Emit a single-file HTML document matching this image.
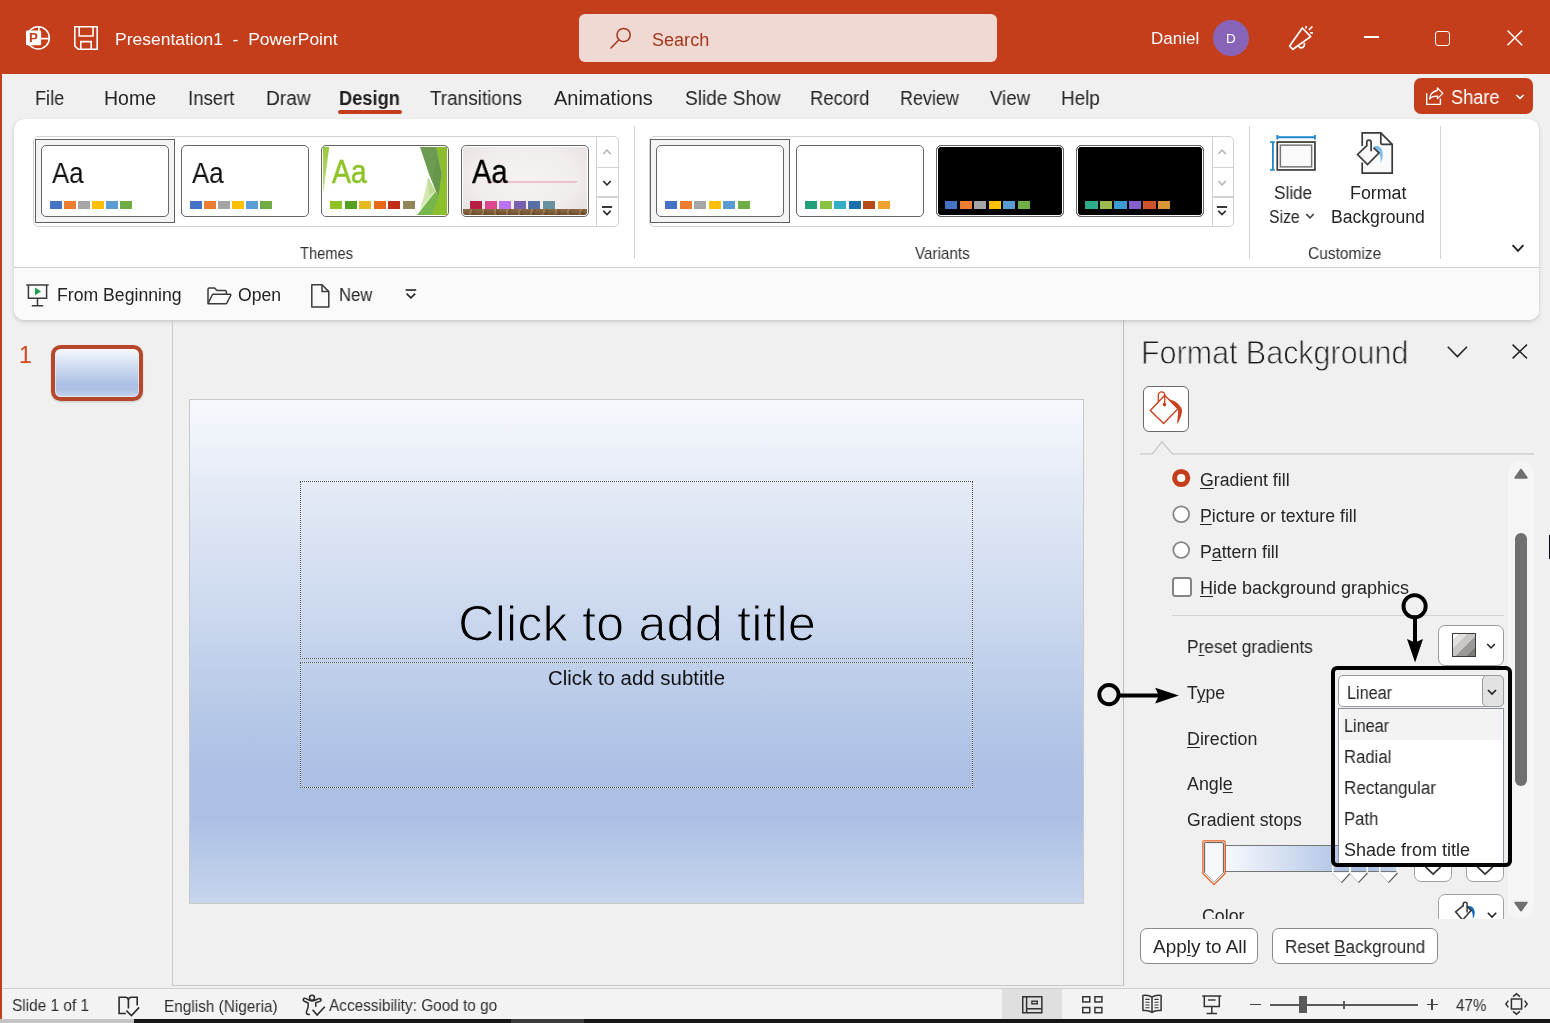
<!DOCTYPE html><html><head><meta charset="utf-8"><title>Presentation1 - PowerPoint</title><style>
html,body{margin:0;padding:0}body{width:1550px;height:1023px;overflow:hidden;position:relative;background:#f0f0f0;font-family:"Liberation Sans", sans-serif;}
.t{position:absolute;white-space:pre;line-height:normal;will-change:transform}svg{overflow:visible}u{text-decoration-thickness:1px;text-underline-offset:2px}
</style></head><body>
<div style="position:absolute;left:0px;top:0px;width:1550px;height:74px;background:#c43e1c"></div>
<div style="position:absolute;left:0px;top:0px;width:2px;height:1019px;background:#c43e1c"></div>
<svg style="position:absolute;left:24px;top:24px;" width="28" height="28" viewBox="0 0 28 28"><circle cx="14.2" cy="13.9" r="11.1" fill="none" stroke="#fff" stroke-width="1.6"/>
<path d="M14.9 3v11M14.9 14.6H25" stroke="#fff" stroke-width="1.6" fill="none"/>
<rect x="2" y="6.5" width="15.1" height="14.8" rx="1.2" fill="#fff"/>
</svg>
<span class="t" style="left:29.4px;top:30.47px;font-size:13.4px;color:#c43e1c;font-weight:700;">P</span>
<svg style="position:absolute;left:74px;top:26px;" width="24" height="24" viewBox="0 0 24 24"><path d="M0.8 0.8H23.2V23.2H4.2L0.8 19.8Z" fill="none" stroke="#fff" stroke-width="1.6"/>
<path d="M5.2 0.8V10H19V0.8" fill="none" stroke="#fff" stroke-width="1.6"/>
<path d="M6.8 23.2V15.6H17.2V23.2" fill="none" stroke="#fff" stroke-width="1.6"/></svg>
<span class="t" style="left:115.4px;top:29.78px;font-size:16.6px;color:#fff;transform:scaleX(1.0538);transform-origin:0 0;">Presentation1  -  PowerPoint</span>
<div style="position:absolute;left:579px;top:14px;width:418px;height:48px;background:#f0d9d3;border-radius:6px"></div>
<svg style="position:absolute;left:610px;top:27px;" width="22" height="22" viewBox="0 0 22 22"><circle cx="13.6" cy="8" r="6.6" fill="none" stroke="#a4371a" stroke-width="1.5"/><path d="M9 12.8L1 21" stroke="#a4371a" stroke-width="1.5" stroke-linecap="round"/></svg>
<span class="t" style="left:652.3px;top:29.67px;font-size:17.6px;color:#a4371a;transform:scaleX(1.0260);transform-origin:0 0;">Search</span>
<span class="t" style="left:1150.6px;top:29.32px;font-size:17px;color:#fff;transform:scaleX(0.9958);transform-origin:0 0;">Daniel</span>
<div style="position:absolute;left:1213px;top:20px;width:36px;height:36px;background:#8764b8;border-radius:50%"></div>
<span class="t" style="left:1226.3px;top:30.78px;font-size:13.5px;color:#fff;">D</span>
<svg style="position:absolute;left:1288px;top:25px;" width="27" height="26" viewBox="0 0 27 26"><path d="M14.3 3L22.7 11.6L4.9 24.3L1.6 21Z" fill="none" stroke="#fff" stroke-width="1.7" stroke-linejoin="round"/>
<path d="M10.4 20.6C11.6 24.2 17 23.4 16.4 17.8" fill="none" stroke="#fff" stroke-width="1.7"/>
<path d="M18.1 1V3.4M20.9 4.8L24.4 1.5M22.2 7.8H25" stroke="#fff" stroke-width="1.7"/></svg>
<div style="position:absolute;left:1363.5px;top:36.3px;width:15.4px;height:1.6px;background:#fff"></div>
<div style="position:absolute;left:1435.4px;top:30.5px;width:15px;height:15px;border:1.5px solid #fff;border-radius:3px;box-sizing:border-box"></div>
<svg style="position:absolute;left:1507.4px;top:30.3px;" width="16" height="16" viewBox="0 0 16 16"><path d="M0.5 0.5L15.2 15.2M15.2 0.5L0.5 15.2" stroke="#fff" stroke-width="1.5"/></svg>
<span class="t" style="left:34.7px;top:87.24px;font-size:19.4px;color:#242424;transform:scaleX(0.9344);transform-origin:0 0;">File</span>
<span class="t" style="left:103.9px;top:87.24px;font-size:19.4px;color:#242424;transform:scaleX(1.0071);transform-origin:0 0;">Home</span>
<span class="t" style="left:187.7px;top:87.24px;font-size:19.4px;color:#242424;transform:scaleX(0.9588);transform-origin:0 0;">Insert</span>
<span class="t" style="left:265.7px;top:87.24px;font-size:19.4px;color:#242424;transform:scaleX(0.9856);transform-origin:0 0;">Draw</span>
<span class="t" style="left:430.3px;top:87.24px;font-size:19.4px;color:#242424;transform:scaleX(0.9764);transform-origin:0 0;">Transitions</span>
<span class="t" style="left:554.2px;top:87.24px;font-size:19.4px;color:#242424;transform:scaleX(1.0300);transform-origin:0 0;">Animations</span>
<span class="t" style="left:684.5px;top:87.24px;font-size:19.4px;color:#242424;transform:scaleX(0.9844);transform-origin:0 0;">Slide Show</span>
<span class="t" style="left:809.8px;top:87.24px;font-size:19.4px;color:#242424;transform:scaleX(0.9502);transform-origin:0 0;">Record</span>
<span class="t" style="left:900.1px;top:87.24px;font-size:19.4px;color:#242424;transform:scaleX(0.9262);transform-origin:0 0;">Review</span>
<span class="t" style="left:989.7px;top:87.24px;font-size:19.4px;color:#242424;transform:scaleX(0.9595);transform-origin:0 0;">View</span>
<span class="t" style="left:1061.2px;top:87.24px;font-size:19.4px;color:#242424;transform:scaleX(0.9752);transform-origin:0 0;">Help</span>
<span class="t" style="left:339.2px;top:87.24px;font-size:19.4px;color:#1f1f1f;font-weight:700;transform:scaleX(0.9419);transform-origin:0 0;">Design</span>
<div style="position:absolute;left:338.2px;top:110.3px;width:63.8px;height:3.6px;background:#c43e1c;border-radius:2px"></div>
<div style="position:absolute;left:1413.8px;top:77.8px;width:119.4px;height:36.1px;background:#c43e1c;border-radius:7px"></div>
<svg style="position:absolute;left:1425px;top:87px;" width="19" height="19" viewBox="0 0 19 19"><path d="M1.7 6.2V17.4H15.4V11.4" fill="none" stroke="#fff" stroke-width="1.4"/>
<path d="M12.4 0.9L17.8 6.4L12.4 11.6V9.1C8.6 9 6 10.2 4.6 12C5 7.4 8 4.2 12.4 3.5Z" fill="none" stroke="#fff" stroke-width="1.3" stroke-linejoin="round"/></svg>
<span class="t" style="left:1450.6px;top:85.94px;font-size:19.4px;color:#fff;transform:scaleX(0.9353);transform-origin:0 0;">Share</span>
<svg style="position:absolute;left:1515px;top:94px;" width="10" height="6" viewBox="0 0 10 6"><path d="M1.3 1L5 4.4L8.7 1" fill="none" stroke="#fff" stroke-width="1.6"/></svg>
<div style="position:absolute;left:14px;top:119px;width:1525px;height:201px;background:#fff;border-radius:10px;box-shadow:0 2px 4px rgba(0,0,0,.15),0 0 1px rgba(0,0,0,.12)"></div>
<div style="position:absolute;left:14px;top:267px;width:1525px;height:53px;background:#fafafa;border-radius:0 0 10px 10px;border-top:1px solid #cdcdcd;box-sizing:border-box"></div>
<div style="position:absolute;left:634.0px;top:126px;width:1px;height:133px;background:#d4d4d4"></div>
<div style="position:absolute;left:1248.8px;top:126px;width:1px;height:133px;background:#d4d4d4"></div>
<div style="position:absolute;left:1439.7px;top:126px;width:1px;height:133px;background:#d4d4d4"></div>
<div style="position:absolute;left:33px;top:136px;width:585.7px;height:90.5px;border:1.2px solid #d2d2d2;border-radius:5px;box-sizing:border-box"></div>
<div style="position:absolute;left:596.1px;top:136px;width:1.2px;height:90.5px;background:#d2d2d2"></div>
<div style="position:absolute;left:596.1px;top:166.9px;width:22.6px;height:1.6px;background:#d2d2d2"></div>
<div style="position:absolute;left:596.1px;top:196.1px;width:22.6px;height:1.6px;background:#d2d2d2"></div>
<div style="position:absolute;left:35.2px;top:139px;width:139.6px;height:84px;border:1px solid #606060;background:#f4f4f4;box-sizing:border-box"></div>
<div style="position:absolute;left:41px;top:145px;width:128px;height:72px;border:1.3px solid #666;border-radius:5px;box-sizing:border-box;overflow:hidden;background:#fff"></div>
<div style="position:absolute;left:181px;top:145px;width:128px;height:72px;border:1.3px solid #666;border-radius:5px;box-sizing:border-box;overflow:hidden;background:#fff"></div>
<span class="t" style="left:52.3px;top:156.82px;font-size:28.6px;color:#111;transform:scaleX(0.9033);transform-origin:0 0;">Aa</span>
<div style="position:absolute;left:50.0px;top:201.1px;width:12px;height:7.7px;background:#4472c4"></div>
<div style="position:absolute;left:64.04px;top:201.1px;width:12px;height:7.7px;background:#ed7d31"></div>
<div style="position:absolute;left:78.08px;top:201.1px;width:12px;height:7.7px;background:#a5a5a5"></div>
<div style="position:absolute;left:92.12px;top:201.1px;width:12px;height:7.7px;background:#ffc000"></div>
<div style="position:absolute;left:106.16px;top:201.1px;width:12px;height:7.7px;background:#5b9bd5"></div>
<div style="position:absolute;left:120.2px;top:201.1px;width:12px;height:7.7px;background:#70ad47"></div>
<span class="t" style="left:192.3px;top:156.82px;font-size:28.6px;color:#111;transform:scaleX(0.9033);transform-origin:0 0;">Aa</span>
<div style="position:absolute;left:190.0px;top:201.1px;width:12px;height:7.7px;background:#4472c4"></div>
<div style="position:absolute;left:204.04px;top:201.1px;width:12px;height:7.7px;background:#ed7d31"></div>
<div style="position:absolute;left:218.08px;top:201.1px;width:12px;height:7.7px;background:#a5a5a5"></div>
<div style="position:absolute;left:232.12px;top:201.1px;width:12px;height:7.7px;background:#ffc000"></div>
<div style="position:absolute;left:246.16px;top:201.1px;width:12px;height:7.7px;background:#5b9bd5"></div>
<div style="position:absolute;left:260.2px;top:201.1px;width:12px;height:7.7px;background:#70ad47"></div>
<div style="position:absolute;left:321px;top:145px;width:128px;height:72px;border:1.3px solid #666;border-radius:5px;box-sizing:border-box;overflow:hidden;background:#fff"><svg width="128" height="72" style="position:absolute;left:-1px;top:-1px">
<defs><linearGradient id="fl" x1="0" y1="0" x2="0" y2="1"><stop offset="0" stop-color="#97c83a"/><stop offset="1" stop-color="#c3df8c"/></linearGradient></defs>
<polygon points="2,2 8.2,2 2.6,45.5 2,45.5" fill="url(#fl)"/>
<polygon points="115,2 126,2 126,70 110,70 117,52 120.5,28" fill="#8bbd2f"/>
<polygon points="96,70 111,70 117.5,52 114.5,46.5" fill="#77b64a"/>
<polygon points="99,2 115.3,2 120.6,28 117.2,52 108,29" fill="#6e9b52"/>
<polygon points="112,30 117.2,52 120.6,28 116,14" fill="#65964a"/>
<polygon points="107,32 114.5,46.5 99,65 104,47" fill="#d4e9b0"/>
<polygon points="107,32 114.5,46.5 108,50" fill="#bfdd92"/>
<polygon points="117.2,52 121,40 126,36 126,70 119,70" fill="#8fc32a" opacity=".6"/>
</svg></div>
<span class="t" style="left:332.1px;top:152.73px;font-size:33px;color:#8cc224;transform:scaleX(0.8594);transform-origin:0 0;-webkit-text-stroke:.5px #8cc224;">Aa</span>
<div style="position:absolute;left:330.0px;top:201.2px;width:12.3px;height:7.7px;background:#90c226"></div>
<div style="position:absolute;left:344.5px;top:201.2px;width:12.3px;height:7.7px;background:#54a021"></div>
<div style="position:absolute;left:359.0px;top:201.2px;width:12.3px;height:7.7px;background:#e6b91e"></div>
<div style="position:absolute;left:373.5px;top:201.2px;width:12.3px;height:7.7px;background:#e76618"></div>
<div style="position:absolute;left:388.0px;top:201.2px;width:12.3px;height:7.7px;background:#c42f1a"></div>
<div style="position:absolute;left:402.5px;top:201.2px;width:12.3px;height:7.7px;background:#918655"></div>
<div style="position:absolute;left:461px;top:145px;width:128px;height:72px;border:1.3px solid #666;border-radius:5px;box-sizing:border-box;overflow:hidden;background:#fff"><div style="position:absolute;left:1px;top:1px;right:1px;bottom:1px;border-radius:3px;background:radial-gradient(ellipse 75% 90% at 50% 45%,#f5f2f1 0,#f1edec 55%,#e2dbda 100%)"></div>
<div style="position:absolute;left:1px;right:1px;bottom:1px;height:6.4px;border-radius:0 0 3px 3px;background:repeating-linear-gradient(100deg,rgba(255,255,255,0) 0 7px,rgba(255,235,200,.18) 7px 9px,rgba(60,30,0,.12) 9px 12px),linear-gradient(#8d6c45,#6e4e2c)"></div>
<div style="position:absolute;left:24.5px;top:35.4px;width:90.5px;height:1.4px;background:#ebc3ce"></div></div>
<span class="t" style="left:472.1px;top:152.73px;font-size:33px;color:#000;transform:scaleX(0.8817);transform-origin:0 0;-webkit-text-stroke:.3px #000;">Aa</span>
<div style="position:absolute;left:470.0px;top:201.2px;width:12.3px;height:7.7px;background:#b71e42"></div>
<div style="position:absolute;left:484.5px;top:201.2px;width:12.3px;height:7.7px;background:#de478e"></div>
<div style="position:absolute;left:499.0px;top:201.2px;width:12.3px;height:7.7px;background:#bc72f0"></div>
<div style="position:absolute;left:513.5px;top:201.2px;width:12.3px;height:7.7px;background:#795faf"></div>
<div style="position:absolute;left:528.0px;top:201.2px;width:12.3px;height:7.7px;background:#586ea6"></div>
<div style="position:absolute;left:542.5px;top:201.2px;width:12.3px;height:7.7px;background:#6892a0"></div>
<svg style="position:absolute;left:597.1px;top:141.7px;" width="20" height="20" viewBox="0 0 20 20"><path d="M-3.7 1.95L0 -1.95L3.7 1.95" transform="translate(10 10)" fill="none" stroke="#b4b4b4" stroke-width="1.6"/></svg>
<svg style="position:absolute;left:597.1px;top:172.5px;" width="20" height="20" viewBox="0 0 20 20"><path d="M-3.7 -1.95L0 1.95L3.7 -1.95" transform="translate(10 10)" fill="none" stroke="#222" stroke-width="1.6"/></svg>
<svg style="position:absolute;left:602.1px;top:205px;" width="10" height="11" viewBox="0 0 10 11"><path d="M-0.1 2H10.1" stroke="#222" stroke-width="1.8"/><path d="M1.3 5.7L5 9.6L8.7 5.7" fill="none" stroke="#222" stroke-width="1.6"/></svg>
<span class="t" style="left:300.3px;top:244.04px;font-size:16.2px;color:#333;transform:scaleX(0.9045);transform-origin:0 0;">Themes</span>
<div style="position:absolute;left:649.2px;top:136px;width:585.0px;height:90.5px;border:1.2px solid #d2d2d2;border-radius:5px;box-sizing:border-box"></div>
<div style="position:absolute;left:1211.6000000000001px;top:136px;width:1.2px;height:90.5px;background:#d2d2d2"></div>
<div style="position:absolute;left:1211.6000000000001px;top:166.9px;width:22.6px;height:1.6px;background:#d2d2d2"></div>
<div style="position:absolute;left:1211.6000000000001px;top:196.1px;width:22.6px;height:1.6px;background:#d2d2d2"></div>
<div style="position:absolute;left:650.4px;top:139px;width:139.6px;height:84px;border:1px solid #606060;background:#f4f4f4;box-sizing:border-box"></div>
<div style="position:absolute;left:656px;top:145px;width:128px;height:72px;border:1.3px solid #666;border-radius:5px;box-sizing:border-box;overflow:hidden;background:#fff"></div>
<div style="position:absolute;left:796px;top:145px;width:128px;height:72px;border:1.3px solid #666;border-radius:5px;box-sizing:border-box;overflow:hidden;background:#fff"></div>
<div style="position:absolute;left:665.1px;top:201.2px;width:12.3px;height:7.7px;background:#4472c4"></div>
<div style="position:absolute;left:679.6px;top:201.2px;width:12.3px;height:7.7px;background:#ed7d31"></div>
<div style="position:absolute;left:694.1px;top:201.2px;width:12.3px;height:7.7px;background:#a5a5a5"></div>
<div style="position:absolute;left:708.6px;top:201.2px;width:12.3px;height:7.7px;background:#ffc000"></div>
<div style="position:absolute;left:723.1px;top:201.2px;width:12.3px;height:7.7px;background:#5b9bd5"></div>
<div style="position:absolute;left:737.6px;top:201.2px;width:12.3px;height:7.7px;background:#70ad47"></div>
<div style="position:absolute;left:805.0px;top:201.2px;width:12.3px;height:7.7px;background:#229e7a"></div>
<div style="position:absolute;left:819.5px;top:201.2px;width:12.3px;height:7.7px;background:#89c143"></div>
<div style="position:absolute;left:834.0px;top:201.2px;width:12.3px;height:7.7px;background:#36adc8"></div>
<div style="position:absolute;left:848.5px;top:201.2px;width:12.3px;height:7.7px;background:#1d6fa9"></div>
<div style="position:absolute;left:863.0px;top:201.2px;width:12.3px;height:7.7px;background:#b64a1b"></div>
<div style="position:absolute;left:877.5px;top:201.2px;width:12.3px;height:7.7px;background:#f0a22e"></div>
<div style="position:absolute;left:936.2px;top:145px;width:128px;height:72px;border:1.3px solid #666;border-radius:5px;box-sizing:border-box;overflow:hidden;background:#000;box-shadow:inset 0 0 0 1px #fff"></div>
<div style="position:absolute;left:1076.2px;top:145px;width:128px;height:72px;border:1.3px solid #666;border-radius:5px;box-sizing:border-box;overflow:hidden;background:#000;box-shadow:inset 0 0 0 1px #fff"></div>
<div style="position:absolute;left:945.2px;top:201.2px;width:12.3px;height:7.7px;background:#4472c4"></div>
<div style="position:absolute;left:959.7px;top:201.2px;width:12.3px;height:7.7px;background:#ed7d31"></div>
<div style="position:absolute;left:974.2px;top:201.2px;width:12.3px;height:7.7px;background:#a5a5a5"></div>
<div style="position:absolute;left:988.7px;top:201.2px;width:12.3px;height:7.7px;background:#ffc000"></div>
<div style="position:absolute;left:1003.2px;top:201.2px;width:12.3px;height:7.7px;background:#5b9bd5"></div>
<div style="position:absolute;left:1017.7px;top:201.2px;width:12.3px;height:7.7px;background:#70ad47"></div>
<div style="position:absolute;left:1085.3px;top:201.2px;width:12.3px;height:7.7px;background:#2daa8a"></div>
<div style="position:absolute;left:1099.8px;top:201.2px;width:12.3px;height:7.7px;background:#9bbb4f"></div>
<div style="position:absolute;left:1114.3px;top:201.2px;width:12.3px;height:7.7px;background:#3a9cd0"></div>
<div style="position:absolute;left:1128.8px;top:201.2px;width:12.3px;height:7.7px;background:#8560c8"></div>
<div style="position:absolute;left:1143.3px;top:201.2px;width:12.3px;height:7.7px;background:#d0512e"></div>
<div style="position:absolute;left:1157.8px;top:201.2px;width:12.3px;height:7.7px;background:#db9535"></div>
<svg style="position:absolute;left:1211.8px;top:141.7px;" width="20" height="20" viewBox="0 0 20 20"><path d="M-3.7 1.95L0 -1.95L3.7 1.95" transform="translate(10 10)" fill="none" stroke="#b4b4b4" stroke-width="1.6"/></svg>
<svg style="position:absolute;left:1211.8px;top:172.5px;" width="20" height="20" viewBox="0 0 20 20"><path d="M-3.7 -1.95L0 1.95L3.7 -1.95" transform="translate(10 10)" fill="none" stroke="#b4b4b4" stroke-width="1.6"/></svg>
<svg style="position:absolute;left:1216.8px;top:205px;" width="10" height="11" viewBox="0 0 10 11"><path d="M-0.1 2H10.1" stroke="#222" stroke-width="1.8"/><path d="M1.3 5.7L5 9.6L8.7 5.7" fill="none" stroke="#222" stroke-width="1.6"/></svg>
<span class="t" style="left:914.6px;top:244.04px;font-size:16.2px;color:#333;transform:scaleX(0.9418);transform-origin:0 0;">Variants</span>
<svg style="position:absolute;left:1270px;top:134px;" width="47" height="38" viewBox="0 0 47 38"><path d="M6.4 3.3H45.8M7.3 1.1V5.6M44.9 1.1V5.6" stroke="#1e87cf" stroke-width="1.9" fill="none"/>
<path d="M2.9 7.2V36.8M0.1 8.1H4.8M0.1 35.9H4.8" stroke="#1e87cf" stroke-width="1.8" fill="none"/>
<rect x="7.25" y="8.05" width="37.7" height="27.9" fill="#fff" stroke="#3a3a3a" stroke-width="1.7"/>
<rect x="10.35" y="11.15" width="31.3" height="21.7" fill="#fafafa" stroke="#797673" stroke-width="1.5"/></svg>
<span class="t" style="left:1274px;top:182.67px;font-size:17.6px;color:#242424;transform:scaleX(0.9764);transform-origin:0 0;">Slide</span>
<span class="t" style="left:1269.4px;top:206.57px;font-size:17.6px;color:#242424;transform:scaleX(0.8938);transform-origin:0 0;">Size</span>
<svg style="position:absolute;left:1300.3px;top:205.8px;" width="20" height="20" viewBox="0 0 20 20"><path d="M-3.7 -2.0L0 2.0L3.7 -2.0" transform="translate(10 10)" fill="none" stroke="#333" stroke-width="1.5"/></svg>
<svg style="position:absolute;left:1356px;top:131px;" width="38" height="44" viewBox="0 0 38 44"><path d="M6.2 15V1.8H24.8L36.2 13.4V42.1H6.2V31.6Z" fill="#fafafa" stroke="none"/>
<path d="M6.2 15V1.8H24.8L36.2 13.4V42.1H6.2V31.4" fill="none" stroke="#3a3a3a" stroke-width="1.7"/>
<path d="M24.8 1.8V12a1.4 1.4 0 0 0 1.4 1.4H36.2" fill="none" stroke="#3a3a3a" stroke-width="1.7"/>
<path d="M17.8 15.5C20 14 24 14.4 26 19C27.6 23 26.8 28 24.4 31.9C25 27 24.6 24.5 22.9 22Z" fill="#7dbdeb"/>
<path d="M10.8 14.7L1.6 23.5L11.5 33.5L22.9 22L17.5 16.6" fill="#fafafa" stroke="#3a3a3a" stroke-width="1.7" stroke-linejoin="miter"/>
<path d="M10.8 15.2V11.2a2.15 2.15 0 0 1 4.3 0V20.3" fill="none" stroke="#3a3a3a" stroke-width="1.7"/></svg>
<span class="t" style="left:1349.8px;top:182.67px;font-size:17.6px;color:#242424;transform:scaleX(1.0137);transform-origin:0 0;">Format</span>
<span class="t" style="left:1330.6px;top:206.57px;font-size:17.6px;color:#242424;transform:scaleX(0.9967);transform-origin:0 0;">Background</span>
<span class="t" style="left:1308px;top:244.04px;font-size:16.2px;color:#333;transform:scaleX(0.9573);transform-origin:0 0;">Customize</span>
<svg style="position:absolute;left:1507.8px;top:237.8px;" width="20" height="20" viewBox="0 0 20 20"><path d="M-5.4 -2.8L0 2.8L5.4 -2.8" transform="translate(10 10)" fill="none" stroke="#222" stroke-width="1.9"/></svg>
<svg style="position:absolute;left:26px;top:284px;" width="23" height="23" viewBox="0 0 23 23"><path d="M0.3 1H22.7" stroke="#3b3b3b" stroke-width="1.5"/><path d="M2.4 1V14.2H20.6V1" fill="none" stroke="#3b3b3b" stroke-width="1.5"/>
<path d="M11.5 14.2V21.6M5.8 21.8H17.2" stroke="#3b3b3b" stroke-width="1.5"/><path d="M9 3.6L15 7.4L9 11.2Z" fill="#1e9e4a"/></svg>
<span class="t" style="left:56.6px;top:284.87px;font-size:17.6px;color:#242424;transform:scaleX(1.0032);transform-origin:0 0;">From Beginning</span>
<svg style="position:absolute;left:207px;top:286.5px;" width="25" height="18" viewBox="0 0 25 18"><path d="M1 16.5V2.2a1.2 1.2 0 0 1 1.2-1.2H7.6L10 3.6H18.2a1.2 1.2 0 0 1 1.2 1.2V7.2" fill="none" stroke="#3b3b3b" stroke-width="1.5" stroke-linejoin="round"/>
<path d="M1 16.8L5.3 7.8a1.2 1.2 0 0 1 1-.6H23.2a.7.7 0 0 1 .6 1L19.8 16.2a1.2 1.2 0 0 1-1 .6Z" fill="none" stroke="#3b3b3b" stroke-width="1.5" stroke-linejoin="round"/></svg>
<span class="t" style="left:238.3px;top:284.87px;font-size:17.6px;color:#242424;transform:scaleX(0.9989);transform-origin:0 0;">Open</span>
<svg style="position:absolute;left:310.5px;top:283.8px;" width="19" height="24" viewBox="0 0 19 24"><path d="M0.8 0.8H11L17.8 7.6V23H0.8Z" fill="none" stroke="#3b3b3b" stroke-width="1.5" stroke-linejoin="round"/><path d="M11 0.8V7.6H17.8" fill="none" stroke="#3b3b3b" stroke-width="1.5" stroke-linejoin="round"/></svg>
<span class="t" style="left:339.3px;top:284.87px;font-size:17.6px;color:#242424;transform:scaleX(0.9459);transform-origin:0 0;">New</span>
<svg style="position:absolute;left:405.3px;top:289.4px;" width="12" height="10" viewBox="0 0 12 10"><path d="M0.6 1H11.2" stroke="#222" stroke-width="1.6"/><path d="M1.6 4.6L5.9 8.8L10.2 4.6" fill="none" stroke="#222" stroke-width="1.6"/></svg>
<span class="t" style="left:19.2px;top:342.49px;font-size:23px;color:#cf4520;">1</span>
<div style="position:absolute;left:50.9px;top:344.7px;width:92.2px;height:56.4px;border:4px solid #b7472a;border-radius:9.5px;box-sizing:border-box;background:linear-gradient(180deg,#f6f8fc 0%,#abc0e4 74%,#abc0e4 83%,#c7d5ed 100%);box-shadow:inset 0 0 0 1px rgba(255,255,255,.45),0 1px 2px rgba(0,0,0,.18)"></div>
<div style="position:absolute;left:172px;top:320px;width:1px;height:666px;background:#c8c8c8"></div>
<div style="position:absolute;left:173px;top:985px;width:951px;height:1px;background:#c8c8c8"></div>
<div style="position:absolute;left:189px;top:399px;width:895px;height:505px;background:linear-gradient(180deg,#f6f8fc 0%,#abc0e4 74%,#abc0e4 83%,#c7d5ed 100%);border:1px solid #c9c9c9;box-sizing:border-box"></div>
<div style="position:absolute;left:300px;top:481px;width:673px;height:177.5px;border:1px solid rgba(255,255,255,.75);box-sizing:border-box"></div>
<div style="position:absolute;left:300px;top:481px;width:673px;height:177.5px;border:1px dotted #4a4a4a;box-sizing:border-box"></div>
<div style="position:absolute;left:300px;top:661.5px;width:673px;height:126.5px;border:1px solid rgba(255,255,255,.75);box-sizing:border-box"></div>
<div style="position:absolute;left:300px;top:661.5px;width:673px;height:126.5px;border:1px dotted #4a4a4a;box-sizing:border-box"></div>
<span class="t" style="left:457.6px;top:594.60px;font-size:49.5px;color:#000;transform:scaleX(1.0246);transform-origin:0 0;-webkit-text-stroke:1.2px #c9d7ee;">Click to add title</span>
<span class="t" style="left:548.2px;top:667.26px;font-size:19.6px;color:#111;transform:scaleX(1.0418);transform-origin:0 0;">Click to add subtitle</span>
<div style="position:absolute;left:1122.8px;top:320px;width:1.2px;height:666px;background:#bcbcbc"></div>
<span class="t" style="left:1141.4px;top:334.25px;font-size:33.2px;color:#1c1c1c;transform:scaleX(0.9175);transform-origin:0 0;-webkit-text-stroke:.9px #f0f0f0;">Format Background</span>
<svg style="position:absolute;left:1447px;top:346px;" width="21" height="12" viewBox="0 0 21 12"><path d="M0.8 0.8L10.4 10.6L20 0.8" fill="none" stroke="#222" stroke-width="1.5"/></svg>
<svg style="position:absolute;left:1511.6px;top:344px;" width="16" height="15" viewBox="0 0 16 15"><path d="M0.6 0.6L15 14.4M15 0.6L0.6 14.4" stroke="#222" stroke-width="1.5"/></svg>
<div style="position:absolute;left:1143.3px;top:386.1px;width:45.7px;height:45.7px;background:#fff;border:1.2px solid #6a6a6a;border-radius:6px;box-sizing:border-box"></div>
<svg style="position:absolute;left:1149px;top:392px;" width="34" height="34" viewBox="0 0 34 34"><path d="M15.7 3.2L1.3 18.5L14.6 31.4L29 16.7Z" fill="none" stroke="#c8401c" stroke-width="1.4" stroke-linejoin="miter"/>
<path d="M9.3 10V3.1a3.2 3.2 0 0 1 6.4 0V11.5" fill="none" stroke="#c8401c" stroke-width="1.3"/>
<circle cx="15.5" cy="12.6" r="1.8" fill="#c8401c"/>
<path d="M20 7.2C24 8 30 10.5 32.8 17C33.6 21.5 31 27.5 28.3 32.2C28 27 29.8 21.5 29 16.7Z" fill="#c8401c"/></svg>
<svg style="position:absolute;left:1140px;top:440px;" width="395" height="16" viewBox="0 0 395 16"><path d="M0 13.9H12.4L22 1.8L32.4 13.9H394.5" fill="none" stroke="#c8c8c8" stroke-width="1.4"/></svg>
<svg style="position:absolute;left:1170px;top:468px;" width="21" height="21" viewBox="0 0 21 21"><circle cx="11.2" cy="10" r="6.6" fill="#fff" stroke="#c43e1c" stroke-width="5"/></svg>
<svg style="position:absolute;left:1170px;top:504px;" width="21" height="21" viewBox="0 0 21 21"><circle cx="11.2" cy="10.2" r="7.9" fill="#fff" stroke="#858585" stroke-width="1.8"/></svg>
<svg style="position:absolute;left:1170px;top:540px;" width="21" height="21" viewBox="0 0 21 21"><circle cx="11.2" cy="10" r="7.9" fill="#fff" stroke="#858585" stroke-width="1.8"/></svg>
<div style="position:absolute;left:1172px;top:577.3px;width:19.9px;height:19.3px;background:#fff;border:2px solid #858585;border-radius:3.5px;box-sizing:border-box"></div>
<span class="t" style="left:1200px;top:470.37px;font-size:17.6px;color:#262626;transform:scaleX(1.0067);transform-origin:0 0;"><u>G</u>radient fill</span>
<span class="t" style="left:1200px;top:506.47px;font-size:17.6px;color:#262626;transform:scaleX(1.0078);transform-origin:0 0;"><u>P</u>icture or texture fill</span>
<span class="t" style="left:1200px;top:542.27px;font-size:17.6px;color:#262626;transform:scaleX(1.0056);transform-origin:0 0;">P<u>a</u>ttern fill</span>
<span class="t" style="left:1200px;top:578.37px;font-size:17.6px;color:#262626;transform:scaleX(1.0224);transform-origin:0 0;"><u>H</u>ide background graphics</span>
<div style="position:absolute;left:1172px;top:615px;width:332px;height:1px;background:#d2d2d2"></div>
<div style="position:absolute;left:1508px;top:461px;width:26px;height:458px;background:#f5f5f5;border-radius:13px"></div>
<svg style="position:absolute;left:1514px;top:468.2px;" width="14" height="11" viewBox="0 0 14 11"><path d="M7 1.6L12.8 9.8H1.2Z" fill="#707070" stroke="#707070" stroke-width="1.8" stroke-linejoin="round"/></svg>
<svg style="position:absolute;left:1514px;top:900.6px;" width="14" height="11" viewBox="0 0 14 11"><path d="M7 9.6L12.8 1.6H1.2Z" fill="#707070" stroke="#707070" stroke-width="1.8" stroke-linejoin="round"/></svg>
<div style="position:absolute;left:1515px;top:532.8px;width:12px;height:253.5px;background:#707070;border-radius:6px"></div>
<span class="t" style="left:1187.3px;top:636.77px;font-size:17.6px;color:#262626;transform:scaleX(0.9817);transform-origin:0 0;">P<u>r</u>eset gradients</span>
<div style="position:absolute;left:1438.3px;top:625px;width:65.5px;height:41px;background:#fff;border:1px solid #9a9a9a;border-radius:7px;box-sizing:border-box"></div>
<div style="position:absolute;left:1451.9px;top:632.8px;width:24px;height:24.1px;background:linear-gradient(135deg,#fff 0%,#fff 12%,#e1e0de 13%,#e1e0de 32%,#c9c7c5 33%,#c9c7c5 55%,#9b9a99 56%,#9b9a99 80%,#7d7b78 81%,#7d7b78 100%);border:1.5px solid #3a3a3a;box-sizing:border-box"></div>
<svg style="position:absolute;left:1481.2px;top:635.5px;" width="20" height="20" viewBox="0 0 20 20"><path d="M-3.8 -1.95L0 1.95L3.8 -1.95" transform="translate(10 10)" fill="none" stroke="#222" stroke-width="1.6"/></svg>
<span class="t" style="left:1187.3px;top:682.77px;font-size:17.6px;color:#262626;transform:scaleX(0.9880);transform-origin:0 0;">T<u>y</u>pe</span>
<span class="t" style="left:1187.3px;top:728.77px;font-size:17.6px;color:#262626;transform:scaleX(1.0139);transform-origin:0 0;"><u>D</u>irection</span>
<span class="t" style="left:1187.3px;top:774.17px;font-size:17.6px;color:#262626;transform:scaleX(1.0152);transform-origin:0 0;">Angl<u>e</u></span>
<span class="t" style="left:1187.3px;top:810.37px;font-size:17.6px;color:#262626;transform:scaleX(1.0042);transform-origin:0 0;">Gradient stops</span>
<div style="position:absolute;left:1225px;top:845px;width:173px;height:26.7px;background:linear-gradient(90deg,#f6f8fc 0%,#abc0e4 74%,#abc0e4 83%,#c7d5ed 100%);border:1px solid #757575;box-sizing:border-box"></div>
<svg style="position:absolute;left:1331.9px;top:843px;" width="19" height="41" viewBox="0 0 19 41"><path d="M0.8 0V30.2M18.2 0V30.2" stroke="#fff" stroke-width="1.5" fill="none"/><path d="M0.5 30L9.5 39.6L18.5 30Z" fill="#fff"/><path d="M0.5 30L9.5 39.6" stroke="#c9c9c9" stroke-width="1" fill="none"/><path d="M9.5 39.6L18.5 30" stroke="#555" stroke-width="1.1" fill="none"/></svg>
<svg style="position:absolute;left:1349.1px;top:843px;" width="19" height="41" viewBox="0 0 19 41"><path d="M0.8 0V30.2M18.2 0V30.2" stroke="#fff" stroke-width="1.5" fill="none"/><path d="M0.5 30L9.5 39.6L18.5 30Z" fill="#fff"/><path d="M0.5 30L9.5 39.6" stroke="#c9c9c9" stroke-width="1" fill="none"/><path d="M9.5 39.6L18.5 30" stroke="#555" stroke-width="1.1" fill="none"/></svg>
<svg style="position:absolute;left:1378.5px;top:843px;" width="19" height="41" viewBox="0 0 19 41"><path d="M0.8 0V30.2M18.2 0V30.2" stroke="#fff" stroke-width="1.5" fill="none"/><path d="M0.5 30L9.5 39.6L18.5 30Z" fill="#fff"/><path d="M0.5 30L9.5 39.6" stroke="#c9c9c9" stroke-width="1" fill="none"/><path d="M9.5 39.6L18.5 30" stroke="#555" stroke-width="1.1" fill="none"/></svg>
<svg style="position:absolute;left:1201.9px;top:840px;" width="24" height="46" viewBox="0 0 24 46"><path d="M2.2 0.9H21.8a1.3 1.3 0 0 1 1.3 1.3V33.4L12 44.6L0.9 33.4V2.2A1.3 1.3 0 0 1 2.2 0.9Z" fill="#f6f8fc" stroke="#e8601c" stroke-width="1.3"/><path d="M3.2 2.6H20.8a.6.6 0 0 1 .6.6V32.6L12 42L2.6 32.6V3.2a.6.6 0 0 1 .6-.6Z" fill="none" stroke="#4a4a4a" stroke-width="0.9"/><path d="M2.6 32.6L12 42L21.4 32.6Z" fill="#fff"/></svg>
<div style="position:absolute;left:1414.2px;top:842px;width:37.5px;height:39.7px;background:#fff;border:1px solid #a0a0a0;border-radius:7px;box-sizing:border-box"></div>
<svg style="position:absolute;left:1424.8px;top:856px;" width="16" height="20" viewBox="0 0 16 20"><path d="M1 0V11.3L8.1 18.1L15.2 11.3V0" fill="none" stroke="#333" stroke-width="1.7" stroke-linejoin="miter"/></svg>
<div style="position:absolute;left:1466.2px;top:842px;width:37.5px;height:39.7px;background:#fff;border:1px solid #a0a0a0;border-radius:7px;box-sizing:border-box"></div>
<svg style="position:absolute;left:1476.8px;top:856px;" width="16" height="20" viewBox="0 0 16 20"><path d="M1 0V11.3L8.1 18.1L15.2 11.3V0" fill="none" stroke="#333" stroke-width="1.7" stroke-linejoin="miter"/></svg>
<div style="position:absolute;left:1140px;top:890px;width:370px;height:28.7px;overflow:hidden">
<span class="t" style="left:62.4px;top:16.07px;font-size:17.6px;color:#262626;transform:scaleX(1.01);transform-origin:0 0"><u>C</u>olor</span>
<div style="position:absolute;left:298px;top:4px;width:65.9px;height:40px;background:#fff;border:1px solid #a0a0a0;border-radius:7px;box-sizing:border-box"></div>
<svg style="position:absolute;left:314px;top:10px" width="24" height="24" viewBox="0 0 24 24"><path d="M13.4 6.2C17.6 5.2 21.6 8.6 20.6 14.5C20.2 16.5 19.8 17.4 18.8 18.8C19 14.5 18.4 12.6 17 10.6Z" fill="#0f6cbd"/><path d="M9.2 5.6L1.6 11.8L8.6 20L17 10.6L13.1 6.3" fill="#fff" stroke="#333" stroke-width="1.5" stroke-linejoin="miter"/><path d="M9.2 6.4V4.2a1.95 1.95 0 0 1 3.9 0V12.4" fill="none" stroke="#333" stroke-width="1.5"/></svg>
<svg style="position:absolute;left:346.6px;top:21.8px" width="10" height="6" viewBox="0 0 10 6"><path d="M0.8 0.8L5 5L9.2 0.8" fill="none" stroke="#222" stroke-width="1.6"/></svg>
</div>
<div style="position:absolute;left:1338px;top:675px;width:166px;height:32.4px;background:#fff;border:1px solid #9a9a9a;border-radius:5px;box-sizing:border-box"></div>
<div style="position:absolute;left:1481.9px;top:675px;width:22px;height:32.4px;background:#e2e2e2;border:1px solid #9a9a9a;border-radius:5px;box-sizing:border-box"></div>
<svg style="position:absolute;left:1482.1px;top:681.5px;" width="20" height="20" viewBox="0 0 20 20"><path d="M-4.0 -2.0L0 2.0L4.0 -2.0" transform="translate(10 10)" fill="none" stroke="#222" stroke-width="1.7"/></svg>
<span class="t" style="left:1346.7px;top:682.77px;font-size:17.6px;color:#262626;transform:scaleX(0.9219);transform-origin:0 0;">Linear</span>
<div style="position:absolute;left:1338px;top:708px;width:166px;height:156px;background:#fff;border:1px solid #8a909c;box-sizing:border-box"></div>
<div style="position:absolute;left:1340px;top:709px;width:162.3px;height:31.2px;background:#f3f3f3"></div>
<span class="t" style="left:1343.7px;top:716.27px;font-size:17.6px;color:#262626;transform:scaleX(0.9219);transform-origin:0 0;">Linear</span>
<span class="t" style="left:1343.7px;top:747.17px;font-size:17.6px;color:#262626;transform:scaleX(0.9481);transform-origin:0 0;">Radial</span>
<span class="t" style="left:1343.7px;top:778.27px;font-size:17.6px;color:#262626;transform:scaleX(0.9697);transform-origin:0 0;">Rectangular</span>
<span class="t" style="left:1343.7px;top:808.87px;font-size:17.6px;color:#262626;transform:scaleX(0.9474);transform-origin:0 0;">Path</span>
<span class="t" style="left:1343.7px;top:840.07px;font-size:17.6px;color:#262626;transform:scaleX(1.0234);transform-origin:0 0;">Shade from title</span>
<div style="position:absolute;left:1331.1px;top:666.4px;width:181px;height:200.3px;border:4.5px solid #000;border-radius:6px;box-sizing:border-box"></div>
<svg style="position:absolute;left:1400px;top:592px;" width="30" height="72" viewBox="0 0 30 72"><circle cx="14.6" cy="14.2" r="11.1" fill="none" stroke="#000" stroke-width="3.9"/>
<path d="M15 26V52" stroke="#000" stroke-width="4"/>
<path d="M15.1 70.4L7 47L15 50.4L23 47Z" fill="#000"/></svg>
<svg style="position:absolute;left:1095px;top:680px;" width="86" height="30" viewBox="0 0 86 30"><circle cx="13.9" cy="14.6" r="9.65" fill="none" stroke="#000" stroke-width="3.9"/>
<path d="M24.5 15.6H66" stroke="#000" stroke-width="4"/>
<path d="M83.9 15.4L60.2 7.7L63.8 15.6L60.2 23.5Z" fill="#000"/></svg>
<div style="position:absolute;left:1140.2px;top:928.4px;width:117.7px;height:35.3px;background:#fff;border:1px solid #8a8a8a;border-radius:7px;box-sizing:border-box"></div>
<span class="t" style="left:1152.5px;top:936.67px;font-size:17.6px;color:#262626;transform:scaleX(1.0762);transform-origin:0 0;">App<u>l</u>y to All</span>
<div style="position:absolute;left:1272.3px;top:928.4px;width:165.3px;height:35.3px;background:#fff;border:1px solid #8a8a8a;border-radius:7px;box-sizing:border-box"></div>
<span class="t" style="left:1285px;top:936.67px;font-size:17.6px;color:#262626;transform:scaleX(0.9677);transform-origin:0 0;">Reset <u>B</u>ackground</span>
<div style="position:absolute;left:1548.7px;top:535px;width:1.3px;height:24px;background:#0a0a14"></div>
<div style="position:absolute;left:2px;top:988px;width:1548px;height:31px;background:#f3f3f3;border-top:1px solid #d0d0d0;box-sizing:border-box"></div>
<span class="t" style="left:12px;top:996.34px;font-size:16.2px;color:#2f2f2f;transform:scaleX(0.9506);transform-origin:0 0;">Slide 1 of 1</span>
<svg style="position:absolute;left:118px;top:995.5px;" width="22" height="21" viewBox="0 0 22 21"><path d="M7.9 17.5H1.1V1.3H7.3Q10.4 1.3 10.4 4.4V12.6M10.4 4.4Q10.4 1.3 13.5 1.3H19.2V9.4" fill="none" stroke="#2b2b2b" stroke-width="1.6"/><path d="M8.4 14.6L13.4 19.6L21.2 11.4" fill="none" stroke="#2b2b2b" stroke-width="1.6"/></svg>
<span class="t" style="left:164.4px;top:996.54px;font-size:16.2px;color:#2f2f2f;transform:scaleX(0.9494);transform-origin:0 0;">English (Nigeria)</span>
<svg style="position:absolute;left:301.5px;top:994px;" width="24" height="22" viewBox="0 0 24 22"><circle cx="10" cy="3.85" r="2.5" fill="none" stroke="#2b2b2b" stroke-width="1.5"/>
<path d="M7.9 20.3C6.4 20.9 4.2 20.2 4.4 18.2C4.6 16.4 6.2 14.4 6.2 12V9L2.4 7.3C0.2 6.2 1.4 3.4 3.9 4.6C6 5.6 8 7 10 7C12 7 14.4 5.4 16.6 4.7C19.2 3.9 19.9 6.7 17.8 7.4L13.8 8.8V12.8" fill="none" stroke="#2b2b2b" stroke-width="1.5" stroke-linejoin="round"/>
<path d="M10.6 15.8L15.1 21L22.8 12.8" fill="none" stroke="#2b2b2b" stroke-width="1.6"/></svg>
<span class="t" style="left:329.3px;top:996.34px;font-size:16.2px;color:#2f2f2f;transform:scaleX(0.9489);transform-origin:0 0;">Accessibility: Good to go</span>
<div style="position:absolute;left:1002.3px;top:989px;width:59.6px;height:30px;background:#dfdfdf"></div>
<svg style="position:absolute;left:1021.7px;top:996.4px;" width="21" height="18" viewBox="0 0 21 18"><rect x="0.75" y="0.75" width="19.1" height="16" fill="none" stroke="#333" stroke-width="1.5"/><path d="M4.6 0.75V16.75M4.6 12.8H19.8" fill="none" stroke="#333" stroke-width="1.5"/><rect x="9.9" y="5.2" width="5.4" height="2.6" fill="none" stroke="#333" stroke-width="1.4"/></svg>
<svg style="position:absolute;left:1081.6px;top:996.4px;" width="21" height="18" viewBox="0 0 21 18"><rect x="0.75" y="0.75" width="7" height="5.2" fill="none" stroke="#333" stroke-width="1.5"/><rect x="12.9" y="0.75" width="7" height="5.2" fill="none" stroke="#333" stroke-width="1.5"/><rect x="0.75" y="11.5" width="7" height="5.2" fill="none" stroke="#333" stroke-width="1.5"/><rect x="12.9" y="11.5" width="7" height="5.2" fill="none" stroke="#333" stroke-width="1.5"/></svg>
<svg style="position:absolute;left:1141.5px;top:994.4px;" width="20" height="20" viewBox="0 0 20 20"><path d="M10 3.2C7.8 1.4 4.4 1 0.9 1.4V16.6C4.4 16.2 7.8 16.6 10 18.4C12.2 16.6 15.6 16.2 19.1 16.6V1.4C15.6 1 12.2 1.4 10 3.2V18.4" fill="none" stroke="#333" stroke-width="1.5" stroke-linejoin="round"/>
<path d="M3.4 5.4H7.6M3.4 8.2H7.6M3.4 11H7.6M3.4 13.8H7.6M12.4 5.4H16.6M12.4 8.2H16.6M12.4 11H16.6M12.4 13.8H16.6" stroke="#333" stroke-width="1.1"/></svg>
<svg style="position:absolute;left:1201.5px;top:994.6px;" width="20" height="20" viewBox="0 0 20 20"><path d="M0.2 1H19.4" stroke="#333" stroke-width="1.5"/><path d="M2.3 1V11.4H17.3V1" fill="none" stroke="#333" stroke-width="1.5"/><path d="M9.8 11.4V18.6M4.6 18.6H15" stroke="#333" stroke-width="1.5"/><path d="M6 5H13.7" stroke="#333" stroke-width="1.4"/></svg>
<div style="position:absolute;left:1250px;top:1003.9px;width:11px;height:1.5px;background:#444"></div>
<div style="position:absolute;left:1270px;top:1004.1px;width:147.5px;height:1.7px;background:#5a5a5a"></div>
<div style="position:absolute;left:1343.3px;top:1001px;width:1.5px;height:7.8px;background:#5a5a5a"></div>
<div style="position:absolute;left:1299px;top:996px;width:7.6px;height:17px;background:#5a5a5a"></div>
<div style="position:absolute;left:1426.5px;top:1003.9px;width:11px;height:1.5px;background:#444"></div>
<div style="position:absolute;left:1431.3px;top:999.1px;width:1.5px;height:11px;background:#444"></div>
<span class="t" style="left:1456px;top:995.94px;font-size:16.2px;color:#2f2f2f;transform:scaleX(0.9412);transform-origin:0 0;">47%</span>
<svg style="position:absolute;left:1505px;top:993.4px;" width="23" height="22" viewBox="0 0 23 22"><rect x="6.4" y="6" width="10.2" height="10" fill="none" stroke="#333" stroke-width="1.5"/>
<path d="M8 3.6L11.5 0.8L15 3.6M8 18.4L11.5 21.2L15 18.4M3.4 7.6L0.8 11L3.4 14.4M19.6 7.6L22.2 11L19.6 14.4" fill="none" stroke="#333" stroke-width="1.5"/></svg>
<div style="position:absolute;left:0px;top:1019px;width:1550px;height:4px;background:#171717"></div>
<div style="position:absolute;left:0px;top:1019px;width:134px;height:4px;background:#c4c4c4"></div>
<div style="position:absolute;left:511px;top:1019px;width:73px;height:4px;background:#3c3c3c"></div>
</body></html>
